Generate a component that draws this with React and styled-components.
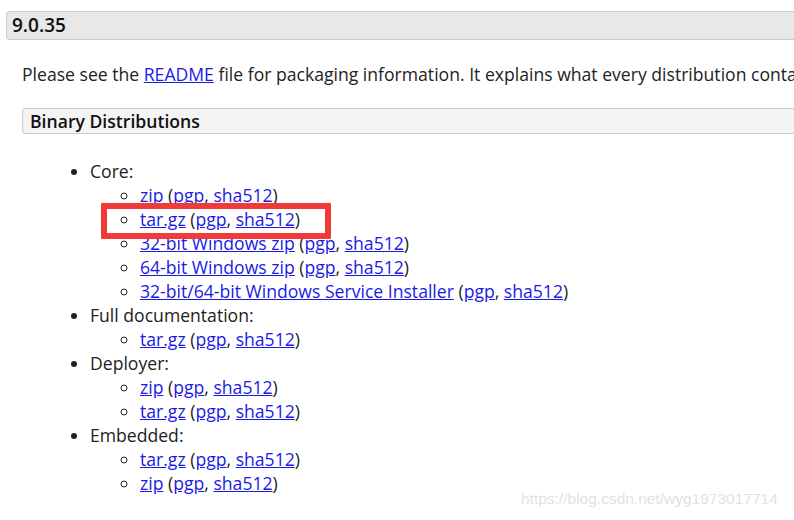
import React from 'react';
import styled, { createGlobalStyle } from 'styled-components';

const GlobalStyle = createGlobalStyle`
  html, body {
    margin: 0;
    padding: 0;
    background: #fff;
    overflow: hidden;
  }
  body {
    width: 794px;
    height: 520px;
    font-family: "Open Sans", "Liberation Sans", sans-serif;
    color: #222;
  }
`;

const Page = styled.div`
  position: relative;
  width: 794px;
  height: 520px;
  overflow: hidden;
  padding-top: 11px;
  box-sizing: border-box;
`;

const VersionHeader = styled.h3`
  margin: 0 0 0 6px;
  height: 29px;
  box-sizing: border-box;
  background: #e8e8e8;
  border: 1px solid #ccc;
  border-right: none;
  border-radius: 4px 0 0 4px;
  padding-left: 5px;
  font-size: 19px;
  font-weight: 600;
  line-height: 27px;
  color: #111;
`;

const Section = styled.div`
  margin-left: 22px;
  border-bottom: 2px solid #d4d4d4;
  height: 480px;
  box-sizing: border-box;
`;

const Intro = styled.p`
  margin: 22px 0 0 0;
  font-size: 17.6px;
  line-height: 24px;
  white-space: nowrap;
`;

const SubHeader = styled.h4`
  margin: 22px 0 0 0;
  height: 26px;
  box-sizing: border-box;
  background: #f4f4f4;
  border: 1px solid #ccc;
  border-right: none;
  border-radius: 4px 0 0 4px;
  padding-left: 7px;
  font-size: 17.6px;
  font-weight: 600;
  line-height: 24px;
  color: #111;
`;

const List = styled.ul`
  margin: ${(p) => (p.$nested ? '0' : '25px 0 0 0')};
  padding-left: ${(p) => (p.$nested ? '50px' : '68px')};
  list-style-type: ${(p) => (p.$nested ? 'circle' : 'disc')};
  font-size: 17.6px;
  line-height: 24px;
`;

const Item = styled.li`
  white-space: nowrap;
`;

const Link = styled.a`
  color: #1a1ae6;
  text-decoration: underline;
`;

const Highlight = styled.div`
  position: absolute;
  left: 101px;
  top: 203px;
  width: 230px;
  height: 36px;
  box-sizing: border-box;
  border: 6px solid #f23a3a;
  pointer-events: none;
`;

const Watermark = styled.div`
  position: absolute;
  left: 521px;
  top: 490px;
  font-family: "Liberation Sans", Arial, sans-serif;
  font-size: 15.5px;
  color: #e2e2e2;
  pointer-events: none;
`;

const Download = ({ name }) => (
  <Item>
    <Link href="#">{name}</Link> (<Link href="#">pgp</Link>, <Link href="#">sha512</Link>)
  </Item>
);

const groups = [
  {
    title: 'Core:',
    files: ['zip', 'tar.gz', '32-bit Windows zip', '64-bit Windows zip', '32-bit/64-bit Windows Service Installer'],
  },
  { title: 'Full documentation:', files: ['tar.gz'] },
  { title: 'Deployer:', files: ['zip', 'tar.gz'] },
  { title: 'Embedded:', files: ['tar.gz', 'zip'] },
];

const App = () => (
  <>
    <GlobalStyle />
    <Page>
      <VersionHeader>9.0.35</VersionHeader>
      <Section>
        <Intro>
          Please see the <Link href="#">README</Link> file for packaging information. It explains what every
          distribution contains.
        </Intro>
        <SubHeader>Binary Distributions</SubHeader>
        <List>
          {groups.map((g) => (
            <Item key={g.title}>
              {g.title}
              <List $nested>
                {g.files.map((f) => (
                  <Download key={f} name={f} />
                ))}
              </List>
            </Item>
          ))}
        </List>
      </Section>
      <Highlight />
      <Watermark>https://blog.csdn.net/wyg1973017714</Watermark>
    </Page>
  </>
);

export default App;
